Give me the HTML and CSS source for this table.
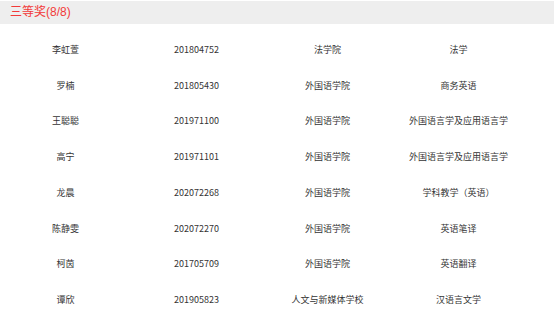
FILE: index.html
```html
<!DOCTYPE html>
<html lang="zh-CN">
<head>
<meta charset="utf-8">
<title>三等奖</title>
<link rel="stylesheet" href="styles.css">
</head>
<body>
<div class="panel">
  <div class="panel-title">三等奖(8/8)</div>
  <table class="list">
    <tbody>
      <tr><td>李虹萱</td><td>201804752</td><td>法学院</td><td>法学</td></tr>
      <tr><td>罗楠</td><td>201805430</td><td>外国语学院</td><td>商务英语</td></tr>
      <tr><td>王聪聪</td><td>201971100</td><td>外国语学院</td><td>外国语言学及应用语言学</td></tr>
      <tr><td>高宁</td><td>201971101</td><td>外国语学院</td><td>外国语言学及应用语言学</td></tr>
      <tr><td>龙晨</td><td>202072268</td><td>外国语学院</td><td>学科教学（英语）</td></tr>
      <tr><td>陈静雯</td><td>202072270</td><td>外国语学院</td><td>英语笔译</td></tr>
      <tr><td>柯茵</td><td>201705709</td><td>外国语学院</td><td>英语翻译</td></tr>
      <tr><td>谭欣</td><td>201905823</td><td>人文与新媒体学校</td><td>汉语言文学</td></tr>
    </tbody>
  </table>
</div>
</body>
</html>
```

FILE: styles.css
```css
html, body {
  margin: 0;
  padding: 0;
  background: #ffffff;
}
body {
  font-family: "Noto Sans CJK SC", "Liberation Sans", sans-serif;
  color: #333333;
}
.panel {
  padding-top: 1px;
}
.panel-title {
  background: #eeeeee;
  color: #f23a3a;
  font-family: "Liberation Sans", "Noto Sans CJK SC", sans-serif;
  font-size: 12px;
  line-height: 23px;
  height: 23px;
  padding-left: 10px;
}
.list {
  width: 524px;
  border-collapse: collapse;
  table-layout: fixed;
  margin-top: 8px;
}
.list td {
  height: 35.75px;
  padding: 0;
  text-align: center;
  vertical-align: middle;
  font-size: 9px;
  line-height: 12px;
  color: #333333;
  white-space: nowrap;
}
```
